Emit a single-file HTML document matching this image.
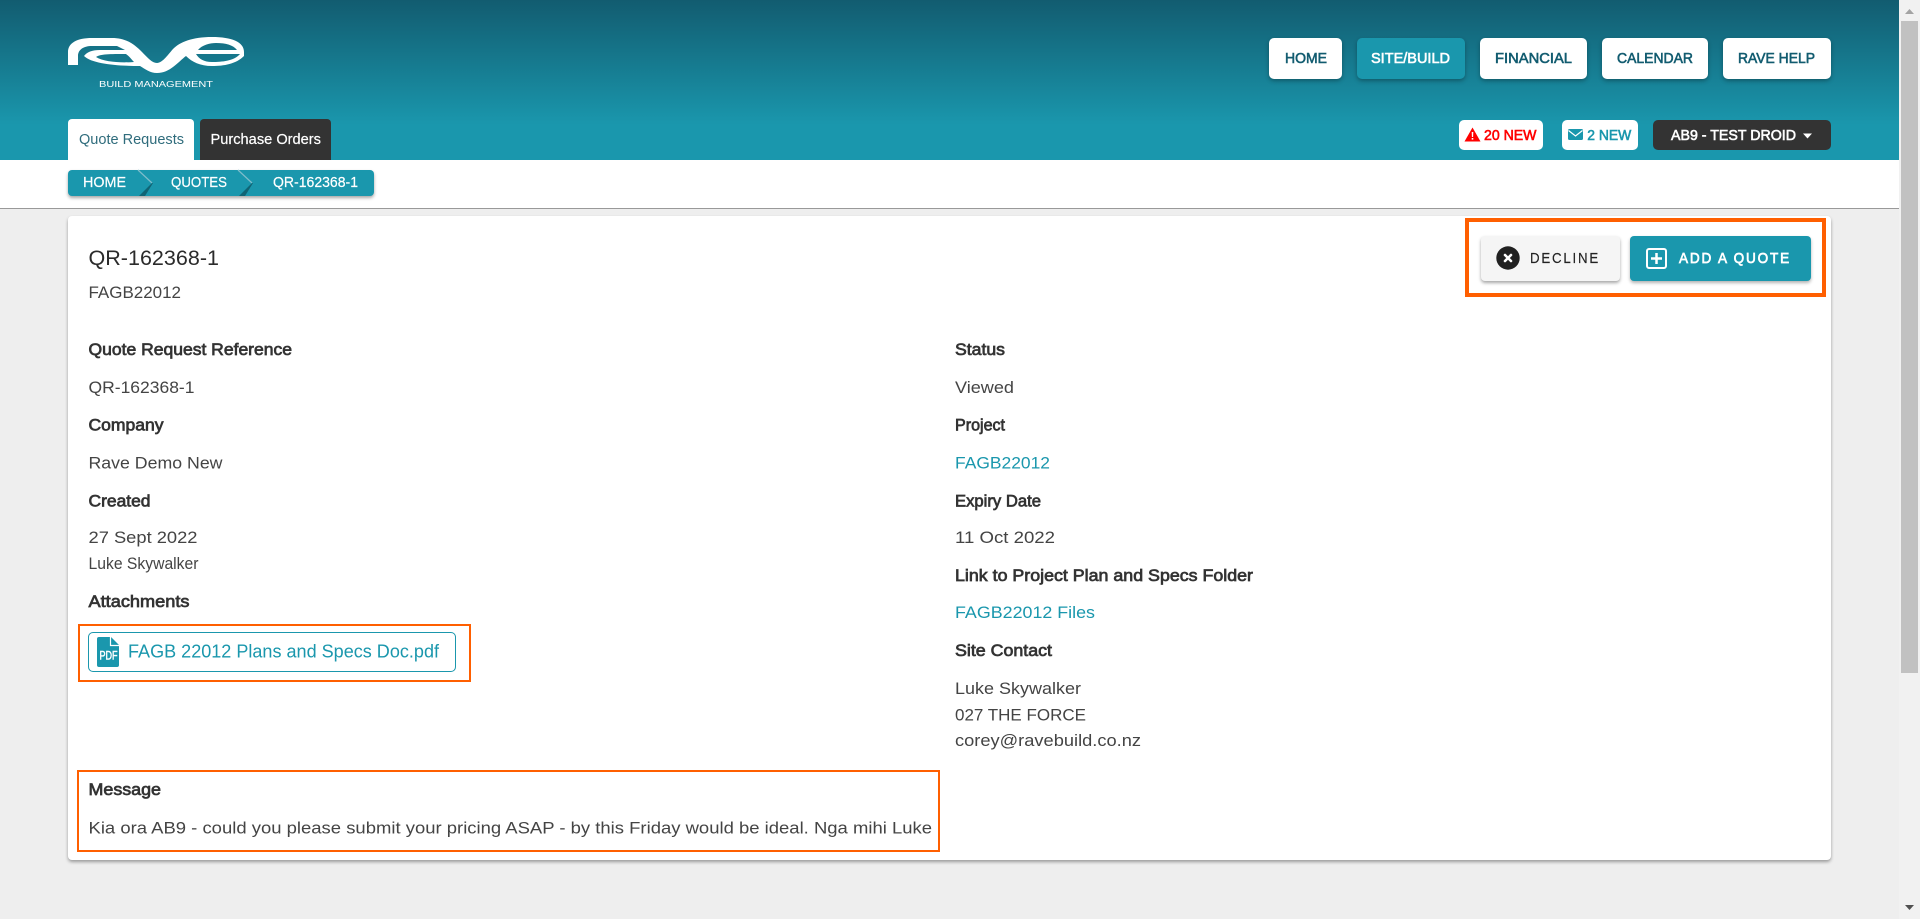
<!DOCTYPE html>
<html lang="en">
<head>
<meta charset="utf-8">
<title>QR-162368-1</title>
<style>
html,body{margin:0;padding:0;width:1920px;height:919px;overflow:hidden;background:#eee;font-family:"Liberation Sans",sans-serif}
.b{position:absolute;box-sizing:border-box}
svg.o{position:absolute;left:0;top:0;width:1920px;height:919px}
svg text{font-family:"Liberation Sans",sans-serif;font-size:16.5px;fill:#444}
.l{fill:#333;stroke:#333;stroke-width:.7}
.n{font-size:15px;fill:#125c70;stroke:#125c70;stroke-width:.6}
.w{font-size:15px;fill:#fff;stroke:#fff;stroke-width:.2}
.a{fill:#1a97ad}
.nb{border-radius:5px;box-shadow:0 2px 4px rgba(0,0,0,.3);height:41px;top:38px}
</style>
</head>
<body>
<div class="b" style="left:0;top:0;width:1899px;height:160px;background:linear-gradient(#125c70 0,#1a97ad 125px,#1a97ad 160px)"></div>
<div class="b" style="left:0;top:160px;width:1899px;height:49px;background:#fff;border-bottom:1px solid #999"></div>

<!-- nav buttons -->
<div class="b nb" style="left:1269px;width:73px;background:#fff"></div>
<div class="b nb" style="left:1357px;width:108px;background:#1a97ad"></div>
<div class="b nb" style="left:1480px;width:107px;background:#fff"></div>
<div class="b nb" style="left:1602px;width:106px;background:#fff"></div>
<div class="b nb" style="left:1723px;width:108px;background:#fff"></div>

<!-- tabs -->
<div class="b" style="left:68px;top:119px;width:126px;height:41px;background:#fff;border-radius:4px 4px 0 0"></div>
<div class="b" style="left:200px;top:119px;width:131px;height:41px;background:#333;border-radius:4px 4px 0 0"></div>

<!-- badges -->
<div class="b" style="left:1459px;top:120px;width:84px;height:30px;background:#fff;border-radius:5px"></div>
<div class="b" style="left:1562px;top:120px;width:76px;height:30px;background:#fff;border-radius:5px"></div>
<div class="b" style="left:1653px;top:120px;width:178px;height:30px;background:#333;border-radius:5px"></div>

<!-- breadcrumb -->
<div class="b" style="left:68px;top:170px;width:306px;height:26px;background:#1a97ad;border-radius:4px;box-shadow:0 2px 3px rgba(0,0,0,.35)"></div>

<!-- card -->
<div class="b" style="left:68px;top:216px;width:1763px;height:644px;background:#fff;border-radius:4px;box-shadow:0 2px 3px rgba(0,0,0,.35)"></div>

<!-- action buttons -->
<div class="b" style="left:1481px;top:236px;width:139px;height:45px;background:#f5f5f5;border-radius:4px;box-shadow:0 2px 3px rgba(0,0,0,.35)"></div>
<div class="b" style="left:1630px;top:236px;width:181px;height:45px;background:#1a97ad;border-radius:4px;box-shadow:0 2px 3px rgba(0,0,0,.3)"></div>

<!-- attachment chip -->
<div class="b" style="left:88px;top:632px;width:368px;height:40px;border:1px solid #1a97ad;border-radius:5px"></div>

<!-- orange highlights -->
<div class="b" style="left:1465px;top:218px;width:361px;height:79px;border:4px solid #ff5f00"></div>
<div class="b" style="left:78px;top:624px;width:393px;height:58px;border:2px solid #ff5f00"></div>
<div class="b" style="left:77px;top:770px;width:863px;height:82px;border:2px solid #ff5f00"></div>

<!-- scrollbar -->
<div class="b" style="left:1899px;top:0;width:21px;height:919px;background:#f1f1f1"></div>
<div class="b" style="left:1901px;top:21px;width:17px;height:652px;background:#c1c1c1"></div>

<svg class="o" viewBox="0 0 1920 919" xmlns="http://www.w3.org/2000/svg">
  <!-- logo -->
  <path fill="#fff" fill-rule="evenodd" d="M68 65V52C68 43 77 38 92 38H112C126 38 134 44 142 52C148 58 152 63 157 63C162 63 167 56 173 49C180 42 192 37 212 37C232 37 244 42 244 52V56C236 64 224 66 212 66C200 66 192 62 186 56C178 62 170 73 157 73C150 73 145 69 140 66C118 66 92 64 84 56C87 52 92 50 100 50H125L117 46H92C83 46 78 50 78 56V65Z M96 57C100 54 110 54 126 54C130 57 132 60 134 62C120 63 104 62 96 57Z M198 50C202 45 210 43 216 43C226 43 233 45 237 50Z M196 54H240C234 61 222 62 212 62C204 62 199 59 196 54Z"/>
  <text x="99" y="87" textLength="114" lengthAdjust="spacingAndGlyphs" style="font-size:8px;fill:#fff">BUILD MANAGEMENT</text>

  <!-- nav text -->
  <text class="n" x="1285" y="63" textLength="42" lengthAdjust="spacingAndGlyphs">HOME</text>
  <text class="n" x="1371" y="63" textLength="79" lengthAdjust="spacingAndGlyphs" style="fill:#fff;stroke:#fff">SITE/BUILD</text>
  <text class="n" x="1495" y="63" textLength="77" lengthAdjust="spacingAndGlyphs">FINANCIAL</text>
  <text class="n" x="1617" y="63" textLength="76" lengthAdjust="spacingAndGlyphs">CALENDAR</text>
  <text class="n" x="1738" y="63" textLength="77" lengthAdjust="spacingAndGlyphs">RAVE HELP</text>

  <!-- tab text -->
  <text x="79" y="144" textLength="105" lengthAdjust="spacingAndGlyphs" style="font-size:15px;fill:#2f6c7c">Quote Requests</text>
  <text class="w" x="210.5" y="144" textLength="110.5" lengthAdjust="spacingAndGlyphs">Purchase Orders</text>

  <!-- badges -->
  <path fill="#f00" d="M1472.5 127.5L1480.5 141.5H1464.5Z"/>
  <path fill="#fff" d="M1471.7 132h1.6l-.2 5h-1.2zM1471.7 138h1.6v1.6h-1.6z"/>
  <text x="1484" y="140" textLength="52.5" lengthAdjust="spacingAndGlyphs" style="font-size:15px;fill:#f00;stroke:#f00;stroke-width:.6">20 NEW</text>
  <rect x="1568" y="129" width="15" height="11" rx="1.5" fill="#1a97ad"/>
  <path d="M1568.5 130.5L1575.5 136L1582.5 130.5" fill="none" stroke="#fff" stroke-width="1.2"/>
  <text x="1587.3" y="140" textLength="44" lengthAdjust="spacingAndGlyphs" style="font-size:15px;fill:#1a97ad;stroke:#1a97ad;stroke-width:.6">2 NEW</text>
  <text x="1671" y="140" textLength="125" lengthAdjust="spacingAndGlyphs" style="font-size:15px;fill:#fff;stroke:#fff;stroke-width:.6">AB9 - TEST DROID</text>
  <path fill="#fff" d="M1803 133.5H1812L1807.5 138.5Z"/>

  <!-- breadcrumb -->
  <text class="w" x="83" y="187" textLength="43" lengthAdjust="spacingAndGlyphs">HOME</text>
  <text class="w" x="171" y="187" textLength="56" lengthAdjust="spacingAndGlyphs">QUOTES</text>
  <text class="w" x="273" y="187" textLength="85" lengthAdjust="spacingAndGlyphs">QR-162368-1</text>
  <path d="M138 170L152 183" stroke="#7fbccb" stroke-width="1.2" fill="none"/>
  <path d="M152 183L139 196H145L153 183Z" fill="#0f5a6a" opacity=".85"/>
  <path d="M238 170L252 183" stroke="#7fbccb" stroke-width="1.2" fill="none"/>
  <path d="M252 183L239 196H245L253 183Z" fill="#0f5a6a" opacity=".85"/>

  <!-- action buttons -->
  <circle cx="1508" cy="258" r="11.7" fill="#212121"/>
  <path d="M1505 255L1511 261M1511 255L1505 261" stroke="#fff" stroke-width="2.6" stroke-linecap="round"/>
  <text x="1530" y="263" textLength="70" lengthAdjust="spacingAndGlyphs" style="font-size:15px;letter-spacing:2px;fill:#222;stroke:#222;stroke-width:.15">DECLINE</text>
  <rect x="1647" y="249" width="19" height="19" rx="2" fill="none" stroke="#fff" stroke-width="2"/>
  <path d="M1656.5 253V264M1651 258.5H1662" stroke="#fff" stroke-width="2.5"/>
  <text x="1679" y="263" textLength="112" lengthAdjust="spacingAndGlyphs" style="font-size:15px;letter-spacing:2px;fill:#fff;stroke:#fff;stroke-width:.7">ADD A QUOTE</text>

  <!-- card header -->
  <text x="88.5" y="265" textLength="130.5" lengthAdjust="spacingAndGlyphs" style="font-size:21.5px;fill:#2b2b2b">QR-162368-1</text>
  <text x="88.5" y="298" textLength="92.5" lengthAdjust="spacingAndGlyphs">FAGB22012</text>

  <!-- left column -->
  <text class="l" x="88.5" y="355" textLength="203.5" lengthAdjust="spacingAndGlyphs">Quote Request Reference</text>
  <text x="88.5" y="393" textLength="106" lengthAdjust="spacingAndGlyphs">QR-162368-1</text>
  <text class="l" x="88.5" y="430.5" textLength="75" lengthAdjust="spacingAndGlyphs">Company</text>
  <text x="88.5" y="468.5" textLength="134" lengthAdjust="spacingAndGlyphs">Rave Demo New</text>
  <text class="l" x="88.5" y="506.5" textLength="62" lengthAdjust="spacingAndGlyphs">Created</text>
  <text x="88.5" y="543" textLength="109" lengthAdjust="spacingAndGlyphs">27 Sept 2022</text>
  <text x="88.5" y="569" textLength="110" lengthAdjust="spacingAndGlyphs">Luke Skywalker</text>
  <text class="l" x="88.5" y="607" textLength="101" lengthAdjust="spacingAndGlyphs">Attachments</text>

  <!-- pdf chip -->
  <path class="a" d="M99 637H111L119 645V665A2 2 0 0 1 117 667H99A2 2 0 0 1 97 665V639A2 2 0 0 1 99 637Z"/>
  <path fill="none" stroke="#fff" stroke-width="1.2" d="M110.5 636.5V645.5H120"/>
  <text x="99.5" y="659.5" textLength="18" lengthAdjust="spacingAndGlyphs" style="font-size:12px;fill:#fff;stroke:#fff;stroke-width:.5">PDF</text>
  <text class="a" x="128" y="657.5" textLength="311" lengthAdjust="spacingAndGlyphs" style="font-size:18.5px">FAGB 22012 Plans and Specs Doc.pdf</text>

  <!-- right column -->
  <text class="l" x="955" y="355" textLength="50" lengthAdjust="spacingAndGlyphs">Status</text>
  <text x="955" y="393" textLength="59" lengthAdjust="spacingAndGlyphs">Viewed</text>
  <text class="l" x="955" y="430.5" textLength="50" lengthAdjust="spacingAndGlyphs">Project</text>
  <text class="a" x="955" y="468.5" textLength="95" lengthAdjust="spacingAndGlyphs">FAGB22012</text>
  <text class="l" x="955" y="506.5" textLength="86" lengthAdjust="spacingAndGlyphs">Expiry Date</text>
  <text x="955" y="543" textLength="100" lengthAdjust="spacingAndGlyphs">11 Oct 2022</text>
  <text class="l" x="955" y="581" textLength="298" lengthAdjust="spacingAndGlyphs">Link to Project Plan and Specs Folder</text>
  <text class="a" x="955" y="618" textLength="140" lengthAdjust="spacingAndGlyphs">FAGB22012 Files</text>
  <text class="l" x="955" y="656" textLength="97" lengthAdjust="spacingAndGlyphs">Site Contact</text>
  <text x="955" y="694" textLength="126" lengthAdjust="spacingAndGlyphs">Luke Skywalker</text>
  <text x="955" y="720.5" textLength="131" lengthAdjust="spacingAndGlyphs">027 THE FORCE</text>
  <text x="955" y="746" textLength="186" lengthAdjust="spacingAndGlyphs">corey@ravebuild.co.nz</text>

  <!-- message -->
  <text class="l" x="88.5" y="795" textLength="72.5" lengthAdjust="spacingAndGlyphs">Message</text>
  <text x="88.5" y="833.5" textLength="843.5" lengthAdjust="spacingAndGlyphs">Kia ora AB9 - could you please submit your pricing ASAP - by this Friday would be ideal. Nga mihi Luke</text>

  <!-- scrollbar arrows -->
  <path fill="#a3a3a3" d="M1905 14H1914L1909.5 9Z"/>
  <path fill="#505050" d="M1905 905H1914L1909.5 910Z"/>
</svg>
</body>
</html>
